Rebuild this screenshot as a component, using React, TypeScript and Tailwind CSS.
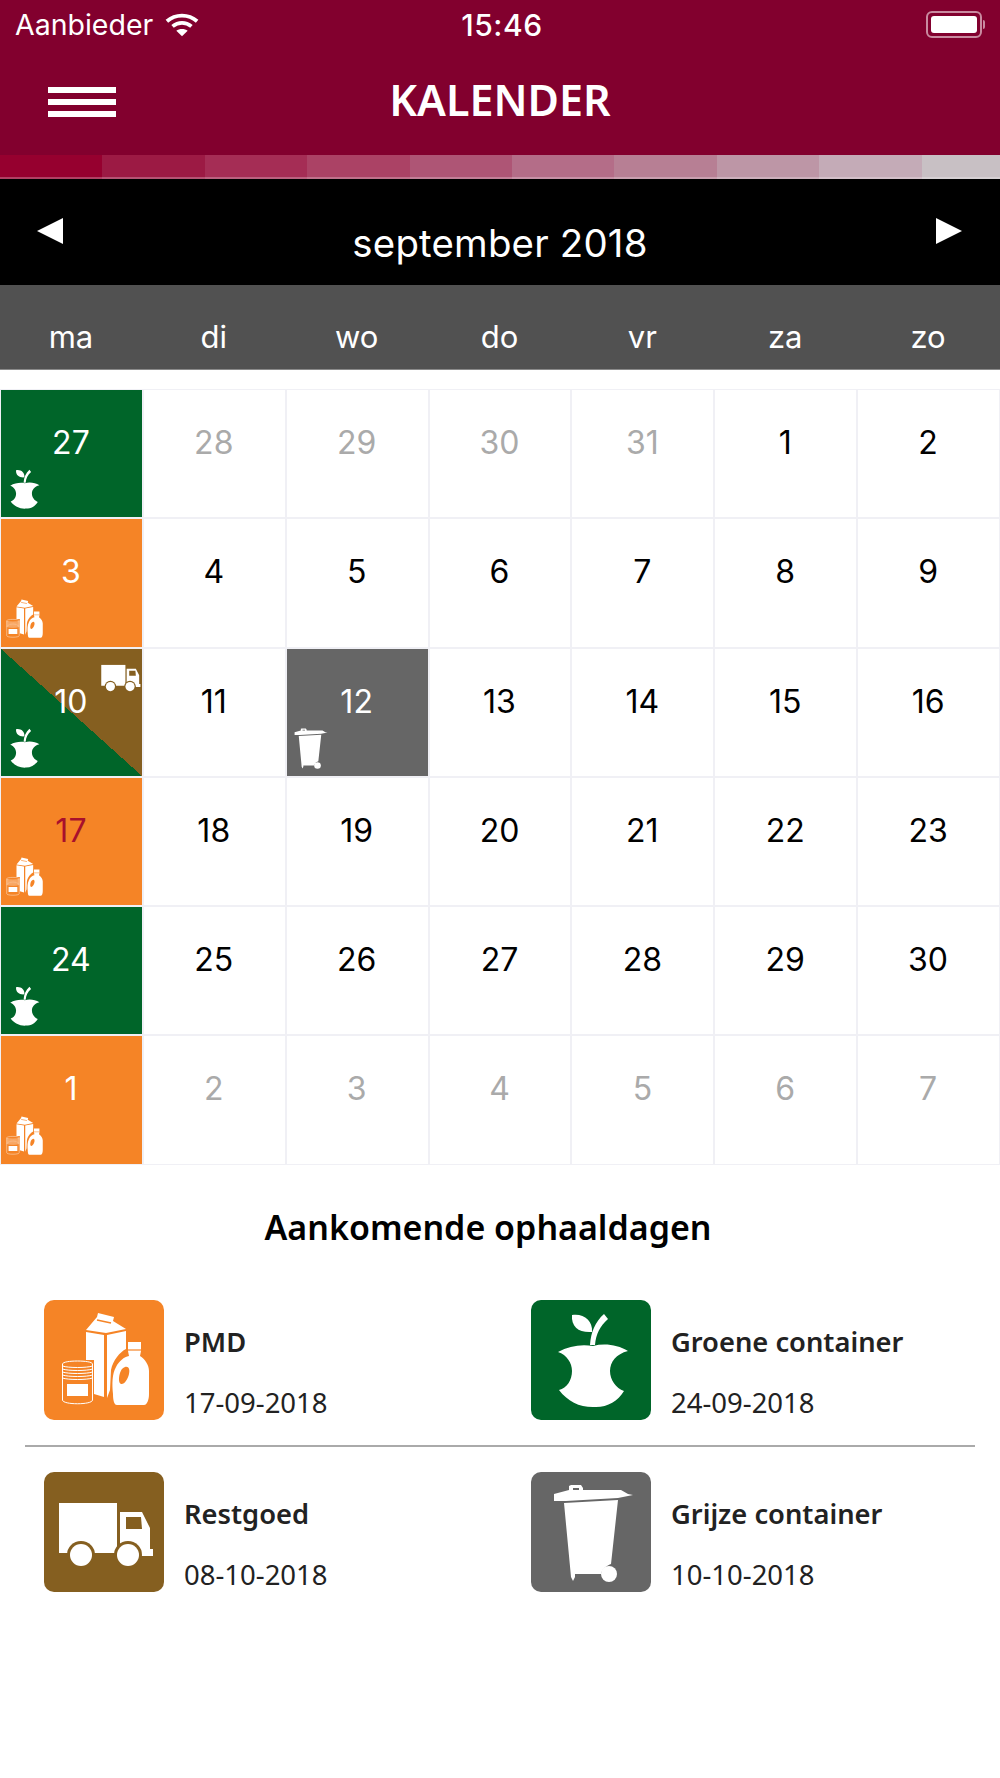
import type { ReactNode } from "react";

const sysFont = "font-['Inter','Liberation_Sans',sans-serif]";
const listFont = "font-['Noto_Sans','Open_Sans',sans-serif]";

const stripColors = ["bg-[#96002f]", "bg-[#9c1a44]", "bg-[#a52d55]", "bg-[#ab4265]", "bg-[#ae5575]", "bg-[#b46d88]", "bg-[#b77f94]", "bg-[#bd96a6]", "bg-[#c4abb7]", "bg-[#c8c0c4]"];
const weekdays = ["ma", "di", "wo", "do", "vr", "za", "zo"];

type Kind = "apple" | "pmd" | "truck" | "bin";

function WasteIcon({ kind, tile, className }: { kind: Kind; tile: string; className: string }) {
  return (
    <svg viewBox="0 0 120 120" className={className} fill="#fff">
      {kind === "apple" && (
        <>
          <path d="M41 15C52 13 62 20 61 32C48 33 40 27 41 15Z" />
          <path d="M73 14L77 19C69 26 65 34 64 45L59 45C60 32 64 22 73 14Z" />
          <path d="M27 52C38 46 50 44 62 46C74 43 87 45 97 51C85 54 79 62 79 71C79 80 85 88 93 91C87 101 77 107 65 107C50 108 37 102 28 90C36 88 41 80 41 71C41 63 36 55 27 52Z" />
        </>
      )}
      {kind === "pmd" && (
        <>
          <path d="M42 32L60 35V97L50 94V60H42Z" />
          <path d="M63 35L82 31V49C76 52 69 60 67 70L66 90L63 98Z" />
          <path d="M42 30L53 17L54 13L70 17L69 21L82 29L62 33Z" />
          <path d="M53 20L67 23" stroke={tile} strokeWidth="1.5" />
          <path d="M84 42H97V51L96 56C101 59 105 65 105 71V94C105 100 103 105 100 105H73C70 105 69 100 69 94C68 84 68 74 72 67C75 61 80 57 85 56L84 51Z" />
          <path d="M84 50H97" stroke={tile} strokeWidth="1.2" />
          <path d="M81 67C85 66 86 70 85 74C84 79 80 85 77 84C74 83 75 76 76 73C77 70 78 68 81 67Z" fill={tile} />
          <path d="M18.5 64C18.5 60 48.5 60 48.5 64V100C48.5 105 18.5 105 18.5 100Z" fill={tile} stroke="#fff" strokeWidth="1" />
          <path d="M18.5 66C24 68 43 68 48.5 66M18.5 69C24 71 43 71 48.5 69M18.5 72C24 74 43 74 48.5 72M18.5 75C24 77 43 77 48.5 75M18.5 78C24 80 43 80 48.5 78" fill="none" stroke="#fff" strokeWidth="1" />
          <rect x="23" y="84" width="21" height="12" />
        </>
      )}
      {kind === "truck" && (
        <>
          <path d="M15 31H73V81H15Z" />
          <path d="M76 40H98L106 56V77H109V84H76Z" />
          <path d="M82 45H97L98 57H82Z" fill={tile} />
          <circle cx="37" cy="83" r="14" fill={tile} />
          <circle cx="84" cy="83" r="14" fill={tile} />
          <circle cx="37" cy="83" r="11" />
          <circle cx="84" cy="83" r="11" />
        </>
      )}
      {kind === "bin" && (
        <>
          <path d="M38 20V14L40 13H50L52 16V20H48V16H42V20Z" />
          <path d="M23 22L38 18H90L97 22L102 23L87 26L35 29L23 29Z" />
          <path d="M33 31L87 28L80 92C75 94 71 97 70 102H44V105L42 109L40 105Z" />
          <circle cx="78" cy="102" r="8" />
        </>
      )}
    </svg>
  );
}

type Day = { n: number; muted?: boolean; bg?: string; kinds?: Kind[]; red?: boolean };

const green = "bg-[#006529]";
const orange = "bg-[#f58426]";
const gray = "bg-[#666666]";
const split = "bg-[linear-gradient(to_top_right,#006529_50%,#855f20_50%)]";

function plainRow(from: number, to: number, muted = false): Day[] {
  const out: Day[] = [];
  for (let i = from; i <= to; i++) out.push({ n: i, muted });
  return out;
}

const days: Day[] = [
  { n: 27, bg: green, kinds: ["apple"] },
  ...plainRow(28, 31, true),
  ...plainRow(1, 2),
  { n: 3, bg: orange, kinds: ["pmd"] },
  ...plainRow(4, 9),
  { n: 10, bg: split, kinds: ["apple", "truck"] },
  { n: 11 },
  { n: 12, bg: gray, kinds: ["bin"] },
  ...plainRow(13, 16),
  { n: 17, bg: orange, kinds: ["pmd"], red: true },
  ...plainRow(18, 23),
  { n: 24, bg: green, kinds: ["apple"] },
  ...plainRow(25, 30),
  { n: 1, bg: orange, kinds: ["pmd"] },
  ...plainRow(2, 7, true),
];

function tileColor(kind: Kind) {
  if (kind === "apple") return "#006529";
  if (kind === "pmd") return "#f58426";
  if (kind === "truck") return "#855f20";
  return "#666666";
}

function DayCell({ day }: { day: Day }) {
  let color = "text-black";
  if (day.muted) color = "text-[#aaaaaa]";
  if (day.bg) color = "text-white";
  if (day.red) color = "text-[#a8102c]";
  return (
    <div className={`relative h-[127.3px] pr-[1px] pt-[33px] text-center text-[32px] leading-[40px] ${day.bg ?? "bg-white"} ${color}`}>
      {day.n}
      {day.kinds?.map((k) => (
        <WasteIcon
          key={k}
          kind={k}
          tile={tileColor(k)}
          className={k === "truck" ? "absolute right-[-3px] top-[3px] h-[50px] w-[50px]" : "absolute bottom-[3px] left-[-2px] h-[50px] w-[50px]"}
        />
      ))}
    </div>
  );
}

function Pickup({ kind, tile, title, date }: { kind: Kind; tile: string; title: string; date: string }) {
  return (
    <div className="flex items-start gap-[20px]">
      <div className={`h-[120px] w-[120px] shrink-0 rounded-[10px] ${tile}`}>
        <WasteIcon kind={kind} tile={tileColor(kind)} className="h-full w-full" />
      </div>
      <div className="pt-[24px] text-[#222222]">
        <div className="text-[27.3px] font-semibold leading-[36px]">{title}</div>
        <div className="mt-[25px] text-[27.5px] leading-[36px]">{date}</div>
      </div>
    </div>
  );
}

function Row({ children }: { children: ReactNode }) {
  return <div className="grid grid-cols-[487px_1fr] pl-[44px]">{children}</div>;
}

export default function App() {
  return (
    <div className={`h-[1778px] w-[1000px] overflow-hidden bg-white ${sysFont}`}>
      <header className="h-[155px] bg-[#82002e] text-white">
        <div className="relative flex h-[50px] items-center pl-[15px] text-[28.5px]">
          <span>Aanbieder</span>
          <svg viewBox="0 0 36 24" className="ml-[12px] h-[24px] w-[34px]" fill="none" stroke="#fff" strokeWidth="4">
            <path d="M2 8C11 0 25 0 34 8" />
            <path d="M8 13.5C14 8.5 22 8.5 28 13.5" />
            <path d="M18 24L12 18C15 15.5 21 15.5 24 18Z" fill="#fff" stroke="none" />
          </svg>
          <span className="absolute left-[4px] right-0 text-center text-[30px] font-medium tracking-[0.6px]">15:46</span>
          <div className="absolute right-[15px] top-[11px] flex items-center">
            <div className="h-[27px] w-[56px] rounded-[6px] border-2 border-[#c98aa0] p-[3px]">
              <div className="h-full w-full rounded-[3px] bg-white" />
            </div>
            <div className="ml-[1px] h-[9px] w-[2px] rounded-r bg-[#c98aa0]" />
          </div>
        </div>
        <div className="relative flex h-[105px] items-start justify-center">
          <div className="absolute left-[48px] top-[37px] flex w-[68px] flex-col gap-[6px]">
            <div className="h-[6px] bg-white" />
            <div className="h-[6px] bg-white" />
            <div className="h-[6px] bg-white" />
          </div>
          <h1 className={`pt-[20px] text-[43px] font-semibold leading-[60px] ${listFont}`}>KALENDER</h1>
        </div>
      </header>

      <div className="flex h-[24px] overflow-hidden">
        {stripColors.map((c) => (
          <div key={c} className={`h-full w-[102.4px] shrink-0 border-b-2 border-white/25 ${c}`} />
        ))}
      </div>

      <div className="relative flex h-[106px] justify-center bg-black text-white">
        <svg viewBox="0 0 26 26" className="absolute left-[37px] top-[39px] h-[26px] w-[26px]" fill="#fff">
          <path d="M26 0V26L0 13Z" />
        </svg>
        <span className="pt-[39px] text-[38.4px] leading-[50px] tracking-[0.2px]">september 2018</span>
        <svg viewBox="0 0 26 26" className="absolute right-[38px] top-[39px] h-[26px] w-[26px]" fill="#fff">
          <path d="M0 0V26L26 13Z" />
        </svg>
      </div>

      <div className="grid h-[85px] grid-cols-7 border-b border-[#8a8a8a] bg-[#515151] text-center text-[31px] leading-[40px] text-white">
        {weekdays.map((d) => (
          <div key={d} className="pr-[1px] pt-[32px]">
            {d}
          </div>
        ))}
      </div>

      <div className="mt-[19px] grid grid-cols-7 gap-[2px] bg-[#f0f0f5] p-[1px]">
        {days.map((d, i) => (
          <DayCell key={i} day={d} />
        ))}
      </div>

      <h2 className={`pr-[24px] pt-[37px] text-center text-[34px] font-semibold leading-[50px] text-black ${listFont}`}>Aankomende ophaaldagen</h2>

      <div className={`mt-[48px] ${listFont}`}>
        <Row>
          <Pickup kind="pmd" tile="bg-[#f58426]" title="PMD" date="17-09-2018" />
          <Pickup kind="apple" tile="bg-[#006529]" title="Groene container" date="24-09-2018" />
        </Row>
        <div className="mx-[25px] mb-[25px] mt-[24px] h-[2px] bg-[#aaaaaa]" />
        <Row>
          <Pickup kind="truck" tile="bg-[#855f20]" title="Restgoed" date="08-10-2018" />
          <Pickup kind="bin" tile="bg-[#666666]" title="Grijze container" date="10-10-2018" />
        </Row>
      </div>
    </div>
  );
}
